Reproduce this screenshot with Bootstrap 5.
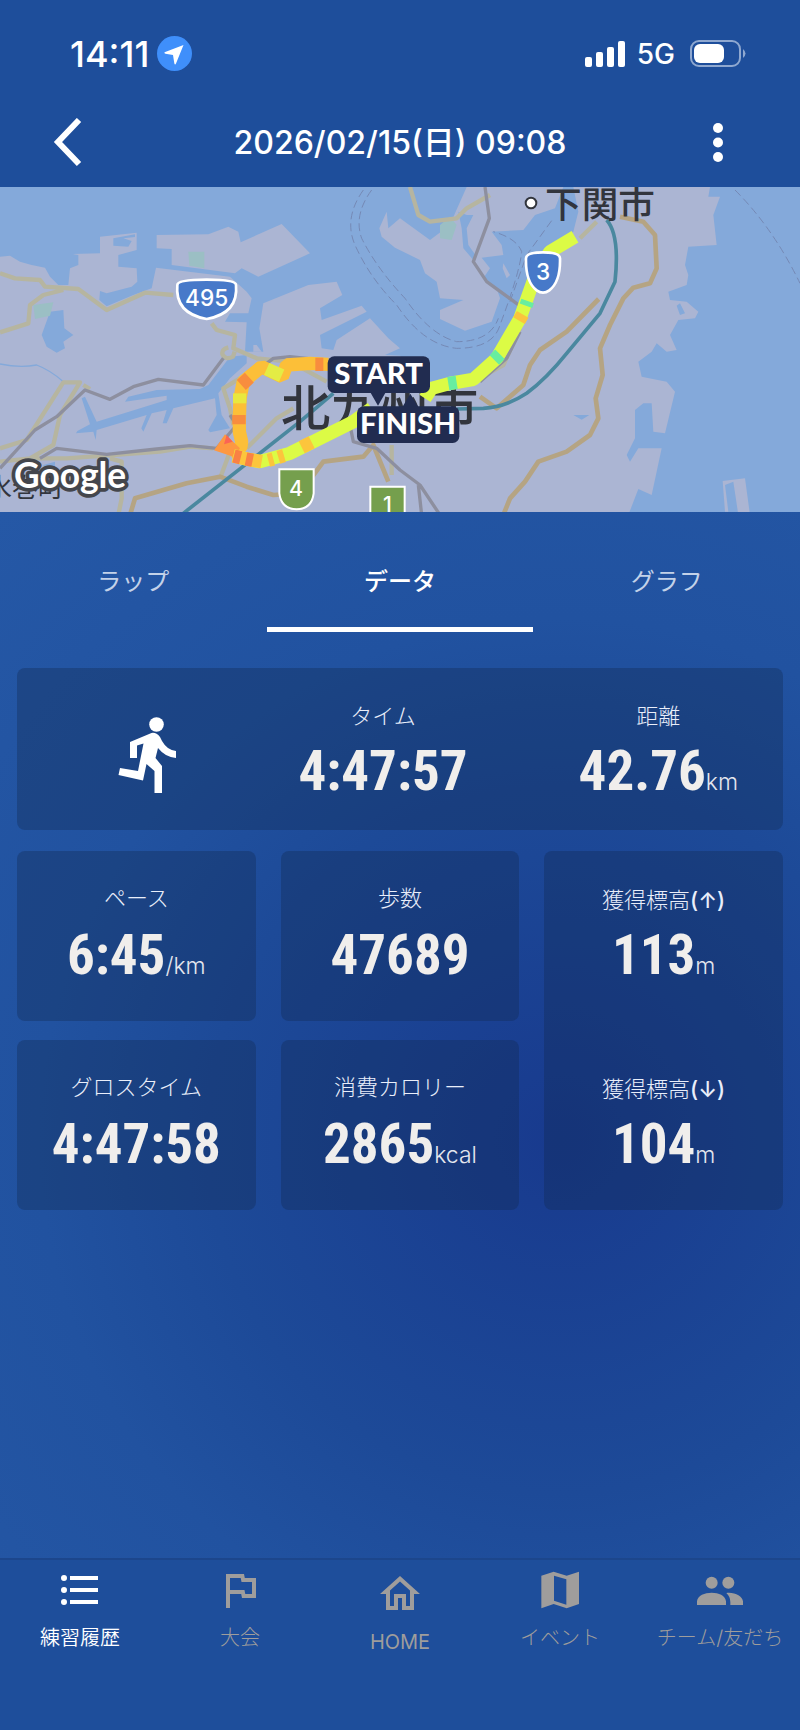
<!DOCTYPE html>
<html lang="ja">
<head>
<meta charset="utf-8">
<meta name="viewport" content="width=device-width, initial-scale=1">
<title>練習履歴</title>
<link href="https://cdn.jsdelivr.net/npm/bootstrap@5.3.0/dist/css/bootstrap.min.css" rel="stylesheet">
<style>
  :root { --bar: #1e4e9b; --muted: #9f9d9c; }
  body {
    font-family: Inter, "Noto Sans CJK JP", sans-serif;
    color: #fff;
    background: var(--bar);
    line-height: 1;
  }
  .app-status { height: 107px; padding: 0 54px 0 70px; }
  .clock { font-size: 36px; font-weight: 500; line-height: 40px; }
  .network { font-size: 28px; font-weight: 500; line-height: 36px; margin: 0 15px 0 12px; }
  .app-title { height: 80px; padding: 0 62px 8px 46px; }
  .app-title h1 { font-size: 32px; font-weight: 500; line-height: 40px; }
  .icon-btn { background: none; border: 0; padding: 0; color: #fff; width: 40px; }
  .back-btn { width: 56px; text-align: left; }
  .map-view { width: 100%; height: auto; display: block; }

  .app-main {
    background: radial-gradient(circle farthest-corner at 70% 60%, #183a8e 0%, #1d4a98 42%, #2152a0 62%, #2558a6 100%);
  }
  .app-tabs { height: 120px; }
  .app-tabs .nav-link {
    height: 120px; border-radius: 0; border-bottom: 5px solid transparent;
    color: #c3d2e9; font-size: 24px; line-height: 36px; padding: 52px 0 0;
  }
  .app-tabs .nav-link.active { color: #fff; font-weight: 500; border-color: #fff; background: none; }
  .metrics { padding: 36px 17px 0; }
  .panel { background: rgba(18, 42, 80, .34); border-radius: 8px; }
  .summary { height: 162px; margin-bottom: 21px; }
  .summary .metric { padding-top: 32px; }
  .summary .metric dd { padding-top: 7px; }
  .sport-icon { padding: 12px 0 0 8px; }
  .time-col { padding-right: 34px; }
  .dist-col { padding-left: 6px; }
  .metric-grid {
    display: grid; grid-template-columns: repeat(3, 1fr);
    grid-template-rows: 170px 170px; gap: 19px 25px;
  }
  .metric { text-align: center; padding-top: 31px; }
  .metric dt { font-size: 22px; font-weight: 300; line-height: 32px; color: #e9eefa; }
  .metric dd {
    margin: 0; color: #f0eeec; font-size: 55px; font-weight: 700; line-height: 64px; padding-top: 9px; white-space: nowrap;
    font-family: "Roboto Condensed", "Liberation Sans Narrow", Roboto, sans-serif;
  }
  .metric dd small { font: 300 23px/32px Inter, sans-serif; color: #e4e6ee; }
  .tall { grid-column: 3; grid-row: 1 / 3; display: grid; grid-template-rows: 170px 170px; row-gap: 19px; }
  .tall .metric { padding-top: 33px; }
  .tall .metric dd { padding-top: 7px; }
  .tall dt span { font-weight: 500; }
  .spacer { height: 348px; }

  .app-nav { background: var(--bar); border-top: 2px solid #1c468c; height: 172px; }
  .app-nav a { color: var(--muted); text-decoration: none; font-size: 20px; font-weight: 300; line-height: 28px; padding-top: 6px; white-space: nowrap; }
  .app-nav a.active { color: #fff; font-weight: 350; }
  .app-nav svg { display: block; margin: 0 auto 10px; }
  .app-nav .home { padding-top: 10px; font-weight: 400; }
</style>
</head>
<body>
<header>
  <div class="app-status d-flex align-items-center justify-content-between">
    <div class="d-flex align-items-center gap-2">
      <span class="clock">14:11</span>
      <svg width="35" height="35" viewBox="0 0 35 35" aria-hidden="true"><circle cx="17.500" cy="17.500" r="17.500" fill="#3f8ffb"/><path d="M26.500 9 19 27.500q-1 2-1.700-.3L16 19 8.500 17.800q-2.300-.7-.3-1.700z" fill="#fff"/></svg>
    </div>
    <div class="d-flex align-items-center">
      <svg width="40" height="26" viewBox="0 0 40 26" fill="#fff" aria-hidden="true"><rect y="16" width="7" height="10" rx="2"/><rect x="11" y="11" width="7" height="15" rx="2"/><rect x="22" y="6" width="7" height="20" rx="2"/><rect x="33" width="7" height="26" rx="2"/></svg>
      <span class="network">5G</span>
      <svg width="56" height="28" viewBox="0 0 56 28" aria-hidden="true"><rect x="1" y="1" width="49" height="25" rx="8" fill="none" stroke="#8fa8d0" stroke-width="2"/><rect x="4" y="4" width="30" height="19" rx="6" fill="#fff"/><path d="M53 9q5 4.500 0 9z" fill="#8fa8d0"/></svg>
    </div>
  </div>
  <div class="app-title d-flex align-items-center justify-content-between">
    <button class="icon-btn back-btn" type="button" aria-label="戻る"><svg width="36" height="50" viewBox="0 0 36 50" fill="none" stroke="#fff" stroke-width="6"><path d="M33 2 12 24l21 22"/></svg></button>
    <h1 class="m-0">2026/02/15(日) 09:08</h1>
    <button class="icon-btn d-flex justify-content-center" type="button" aria-label="メニュー"><svg width="12" height="42" viewBox="0 0 12 42" fill="#fff"><circle cx="6" cy="6" r="5"/><circle cx="6" cy="20.500" r="5"/><circle cx="6" cy="35" r="5"/></svg></button>
  </div>
</header>

<svg class="map-view" viewBox="0 6 2400 975" role="img" aria-label="北九州市のコースマップ">
  <rect width="2400" height="990" fill="#84a9da"/>
  <g fill="#abb5d3">
    <!-- mainland -->
    <path d="M0 215 30 212 60 230 95 240 135 248 150 275 175 300 205 300 210 250 235 240 235 210 218 207 300 205 300 155 410 143 410 195 355 210 355 245 410 250 412 290 395 305 320 325 300 318 298 345 320 364 400 330 455 310 468 248 690 275 740 320 755 340 745 385 690 385 675 410 740 412 735 500 790 500 778 430 790 355 925 300 1010 290 1027 330 960 370 965 405 1085 362 1100 380 960 450 965 490 1000 495 1010 465 1110 400 1165 460 1200 490 1155 510 1200 512 1290 590 1380 590 1450 550 1530 460 1580 370 1620 230 1720 140 1735 80 1720 6 2130 6 2125 35 2160 35 2140 90 2150 180 2065 185 2055 240 2065 270 2060 300 2005 320 2010 345 2060 350 2095 380 2085 400 2035 405 2010 450 2030 495 2000 500 1970 475 1955 500 1915 530 1925 575 2000 590 2025 620 1995 745 1960 740 1955 655 1930 655 1905 675 1905 760 1880 810 1890 830 1915 790 1985 790 1955 930 1915 912 1885 990 0 990z"/>
    <path d="M470 150 625 148 685 125 715 140 722 172 845 117 930 205 775 275 725 250 705 265 515 240 515 192 470 190z"/>
    <path d="M1400 6 1365 85 1350 120 1290 165 1200 100 1165 130 1160 80 1138 130 1145 155 1185 188 1260 225 1275 265 1310 290 1320 340 1390 345 1320 375 1320 402 1395 437 1475 410 1500 340 1490 310 1450 280 1470 250 1445 218 1510 210 1505 180 1475 140 1570 135 1605 90 1665 70 1690 6z"/>
    <path d="M1510 235 1530 270 1520 280 1508 250zM2168 888 2235 880 2250 990 2215 990 2200 890 2175 900 2185 980 2175 980z"/>
  </g>
  <g fill="#84a9da">
    <path d="M150 380 190 375 193 430 220 450 190 470 195 490 170 503 140 485 125 450zM690 515 740 510 740 535 690 580 655 625 665 690 690 730 630 742 625 735 650 690 645 640 520 670 500 715 488 715 500 675 455 685 430 740 424 730 440 690 290 735 287 765 280 740 228 745 232 738 270 718 245 640 255 635 290 710 500 645 500 632 375 650 385 635 470 615 600 612 625 600z"/>
    <path d="M340 160 405 148 405 156 370 160 395 168 385 185 340 182zM1375 80 1400 90 1420 90 1400 130 1405 180 1430 215 1420 225 1390 190 1385 130zM2030 362 2040 355 2055 385 2040 390zM1720 690 1768 690 1745 704zM130 840 165 830 165 850 130 852z"/>
    <path d="M0 537Q60 550 110 540 150 555 190 590" fill="none" stroke="#84a9da" stroke-width="4"/>
    <path d="M760 480 770 480 785 500 760 500z" fill="#abb5d3"/>
  </g>
  <g fill="#9bbfc4"><path d="M565 200h48v50l-45-8zM100 360l60-8-10 40-45 10zM1320 120l30-25 20 25-15 45-35-5z"/></g>
  <g fill="none" stroke-linejoin="round">
    <g stroke="#7589b5" stroke-width="3" stroke-dasharray="24 12">
      <path d="M1090 15Q1030 100 1065 180 1110 280 1190 360 1270 480 1370 490 1480 490 1500 420 1560 260 1565 200 1550 160 1480 140M1115 15Q1060 90 1085 160 1130 250 1215 340 1290 450 1370 470 1470 470 1495 400M1530 350 1580 210 1660 100M2205 15Q2320 130 2400 295"/>
    </g>
    <g stroke="#b6b5a0" stroke-width="13">
      <path d="M0 265 45 280 120 285 135 305 235 312 320 375 435 323 520 330M0 442 85 415 90 360 130 330 190 315M635 415 650 435 705 450 700 490 770 520 870 530 980 590M685 487q-20 5-18 20 10 20 32 8l5-15M0 790 80 765 190 592 240 592 180 690 160 780 90 820 0 830M90 820H200L480 800 570 785 640 790M250 600 270 612M720 580 670 610 690 670 700 720M740 790 830 700 880 670M690 800 660 880M330 820 365 830 365 940 355 990M1230 6 1255 90 1290 110 1370 100 1400 70 1470 30M1740 160 1790 110M1175 780V870"/>
      <path d="M1420 590 1510 540 1560 430"/>
    </g>
    <g stroke="#b5a483" stroke-width="14">
      <path d="M390 990 405 940 560 895 660 875 740 905 820 930 900 925 970 830 1090 815 1120 780 1165 890M1510 990 1530 940 1575 890 1615 830 1700 800 1770 750 1795 700 1787 640 1808 570 1800 490 1830 420 1870 340 1900 308 1950 295 1970 250 1965 150 1930 110 1860 95M1796 342 1700 440 1620 495 1590 540 1570 600 1490 670 1440 635"/>
    </g>
    <g stroke="#8d8f9f" stroke-width="10">
      <path d="M0 850 105 735 170 695 255 615 330 643 400 605 475 583 610 600 670 520M120 820 170 790 320 808 470 792 570 782 650 790 710 720 690 690M780 550 820 520 870 515 960 525M1455 6 1468 100 1420 230 1460 290 1570 370M1050 720 1060 770 1130 790 1200 855 1260 900 1320 990M1255 900 1265 990M1440 590 1520 520 1560 440"/>
    </g>
    <path d="M550 985 900 710 1000 625M1370 672 1450 670Q1520 665 1580 625 1640 580 1700 505L1800 385 1845 290Q1860 150 1820 105" stroke="#4a889f" stroke-width="11"/>
  </g>

  <!-- place names -->
  <g fill="#32353d" font-family="Noto Sans CJK JP, sans-serif" font-weight="500">
    <text x="1635" y="98" font-size="110">下関市</text>
    <text x="843" y="722" font-size="148">北九州市</text>
    <text x="-42" y="936" font-size="78" font-weight="400">水巻町</text>
  </g>
  <circle cx="1593" cy="54" r="16" fill="#fff" stroke="#32353d" stroke-width="6"/>

  <!-- course coloured by pace -->
  <g fill="none" stroke-width="40" stroke-linejoin="bevel">
    <path d="M985 538 930 535 860 540 847 575 785 545 730 590 720 640 718 705 718 740 725 770 722 790 690 800" stroke="#fcbf38"/>
    <path d="M845 572 800 552" stroke="#e4ec44"/>
    <path d="M970 538h-24M748 578 724 600M717 690V718" stroke="#f88d3e"/>
    <path d="M719 625V655" stroke="#e9e83f"/>
    <path d="M675 748 720 790 700 815 642 796z" fill="#fd9842" stroke="none"/>
    <path d="M680 750 698 770 672 778z" fill="#fb6454" stroke="none"/>
    <path d="M700 812 740 822 780 830 870 805 950 765 1060 710 1115 670" stroke="#dcfb45"/>
    <path d="M700 812 740 822 785 830M805 826 820 822M835 817 852 812M905 787 935 772" stroke="#fcc53c"/>
    <path d="M702 813 722 818M738 822 758 826" stroke="#f98145"/>
    <path d="M1275 640 1295 610 1350 595 1420 583 1490 520 1560 400 1585 330 1610 260 1650 200 1725 155" stroke="#dcfb45"/>
    <path d="M1345 596 1370 592M1483 525 1500 508M1578 362 1583 348" stroke="#68eda0"/>
    <path d="M1557 407 1568 388" stroke="#fbc53d"/>
  </g>

  <!-- road shields -->
  <g fill="#4779c9" stroke="#fff" stroke-width="8">
    <path d="M532 300Q532 284 620 284 708 284 708 300 716 385 620 402 524 385 532 300z"/>
    <path d="M1578 220Q1578 202 1629 202 1680 202 1680 220 1682 290 1648 316 1629 330 1610 316 1576 290 1578 220z"/>
    <path fill="#759f4d" stroke-width="6" d="M838 853H941V925Q935 972 890 973 844 972 838 925zM1111 905H1214V990H1111z"/>
  </g>
  <g fill="#fff" font-family="Inter, sans-serif" font-weight="500" text-anchor="middle">
    <text x="620" y="364" font-size="68">495</text>
    <text x="1629" y="286" font-size="68">3</text>
    <text x="888" y="932" font-size="64">4</text>
    <text x="1162" y="982" font-size="64">1</text>
  </g>

  <!-- start and finish flags -->
  <g fill="#212c50">
    <path d="M1110 620h48l-24 42zM1205 670l26-44 26 44z"/>
    <rect x="983" y="514" width="307" height="110" rx="20"/>
    <rect x="1071" y="664" width="307" height="110" rx="20"/>
  </g>
  <g fill="#fff" font-family="Lato, sans-serif" font-weight="900" font-size="88" text-anchor="middle">
    <text x="1136" y="597">START</text>
    <text x="1224" y="747">FINISH</text>
  </g>
  <text x="42" y="910" font-family="Lato, sans-serif" font-weight="700" font-size="106" fill="#fff" stroke="#44464c" stroke-width="22" stroke-linejoin="round" paint-order="stroke">Google</text>
</svg>

<main class="app-main">
  <nav class="app-tabs nav nav-pills nav-justified text-center">
    <a class="nav-link" href="#lap">ラップ</a>
    <a class="nav-link active" href="#data" aria-current="page">データ</a>
    <a class="nav-link" href="#graph">グラフ</a>
  </nav>

  <section class="metrics" id="data">
    <div class="panel summary row g-0">
      <div class="sport-icon col-4 d-flex align-items-center justify-content-center">
        <svg width="84" height="84" viewBox="107 173 84 84" fill="#fff" role="img" aria-label="ランニング"><circle cx="156.500" cy="184.500" r="7.300"/><path d="M151.500 193 130 202V218H137V205.500L143.500 203.500 138 231 120 228 118.500 235 143 240.500 146.500 224 154.500 231V253H162V226L155.500 218 158 208Q165 217 176 218V211Q167 210 162 201L160 197Q156 192 151.500 193z"/></svg>
      </div>
      <dl class="metric time-col col-4 m-0"><dt>タイム</dt><dd>4:47:57</dd></dl>
      <dl class="metric dist-col col-4 m-0"><dt>距離</dt><dd>42.76<small>km</small></dd></dl>
    </div>
    <div class="metric-grid">
      <dl class="panel metric m-0"><dt>ペース</dt><dd>6:45<small>/km</small></dd></dl>
      <dl class="panel metric m-0"><dt>歩数</dt><dd>47689</dd></dl>
      <dl class="panel metric m-0"><dt>グロスタイム</dt><dd>4:47:58</dd></dl>
      <dl class="panel metric m-0"><dt>消費カロリー</dt><dd>2865<small>kcal</small></dd></dl>
      <div class="panel tall">
        <dl class="metric m-0"><dt>獲得標高<span>(↑)</span></dt><dd>113<small>m</small></dd></dl>
        <dl class="metric m-0"><dt>獲得標高<span>(↓)</span></dt><dd>104<small>m</small></dd></dl>
      </div>
    </div>
  </section>
  <div class="spacer"></div>
</main>

<footer>
  <nav class="app-nav row g-0 text-center">
    <a class="col active" href="#history" aria-current="page"><svg width="48" height="48" viewBox="0 0 24 24" fill="currentColor"><path d="M4 10.500a1.500 1.500 0 1 0 0 3 1.500 1.500 0 0 0 0-3zm0-6a1.500 1.500 0 1 0 0 3 1.500 1.500 0 0 0 0-3zm0 12a1.500 1.500 0 1 0 0 3 1.500 1.500 0 0 0 0-3zM7 19h14v-2H7v2zm0-6h14v-2H7v2zm0-8v2h14V5H7z"/></svg>練習履歴</a>
    <a class="col" href="#races"><svg width="48" height="48" viewBox="0 0 24 24" fill="currentColor"><path d="M12.360 6l.4 2H18v6h-3.360l-.4-2H7V6h5.360M14 4H5v17h2v-7h5.600l.4 2h7V6h-5.600L14 4z"/></svg>大会</a>
    <a class="col home" href="#home"><svg width="48" height="48" viewBox="0 0 24 24" fill="currentColor"><path d="M12 5.690l5 4.500V18h-2v-6H9v6H7v-7.810l5-4.500M12 3L2 12h3v8h6v-6h2v6h6v-8h3L12 3z"/></svg>HOME</a>
    <a class="col" href="#events"><svg width="48" height="48" viewBox="408 78 144 144" fill="currentColor"><path fill-rule="evenodd" d="M424 107 461 95 500 107 537 95V192L500 205 461 192 424 205zM462 107V182L499 194V118z"/></svg>イベント</a>
    <a class="col" href="#team"><svg width="48" height="48" viewBox="888 78 144 144" fill="currentColor"><circle cx="935" cy="128" r="18"/><circle cx="985" cy="128" r="18"/><path d="M891 195V184C893 166 914 158 935 158S976 166 978 184V195zM991 195V186Q991 170 979 159C1004 156 1027 168 1029 184V195z"/></svg>チーム/友だち</a>
  </nav>
</footer>
<script src="https://cdn.jsdelivr.net/npm/bootstrap@5.3.0/dist/js/bootstrap.bundle.min.js"></script>
</body>
</html>
